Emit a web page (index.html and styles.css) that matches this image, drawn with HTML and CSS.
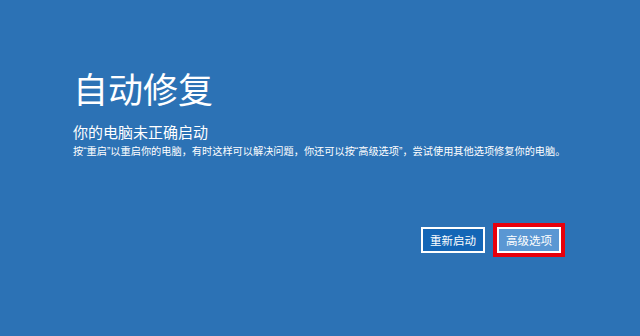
FILE: index.html
```html
<!DOCTYPE html>
<html lang="zh-CN">
<head>
    <meta charset="UTF-8">
    <meta name="viewport" content="width=device-width, initial-scale=1.0">
    <title>自动修复</title>
    <link rel="stylesheet" href="styles.css">
</head>
<body>

<div class="screen">
    <h1>自动修复</h1>
    <h2>你的电脑未正确启动</h2>
    <p class="message">按“重启”以重启你的电脑，有时这样可以解决问题，你还可以按“高级选项”，尝试使用其他选项修复你的电脑。</p>

    <div class="actions">
        <button class="btn btn-restart">重新启动</button>
        <button class="btn btn-advanced">高级选项</button>
    </div>
</div>

</body>
</html>
```

FILE: styles.css
```css
body {
    margin: 0;
    padding: 0;
    background-color: #2c72b5;
    font-family: "Noto Sans CJK SC", "Noto Sans", sans-serif;
    color: #fff;
    height: 100vh;
}

.screen {
    padding: 68px 79px 0 73px;
}

h1 {
    margin: 0;
    font-size: 35px;
    line-height: 40px;
    font-weight: 400;
}

h2 {
    margin: 15px 0 0;
    font-size: 15px;
    line-height: 18px;
    font-weight: 400;
}

/* narrow latin quotes, like the original system font */
.message {
    margin: 4px 0 0;
    font-family: "Liberation Sans", "Noto Sans CJK SC", sans-serif;
    font-size: 10.2px;
    line-height: 14px;
    white-space: nowrap;
}

.actions {
    display: flex;
    justify-content: flex-end;
    gap: 12px;
    margin-top: 68px;
}

.btn {
    font-family: inherit;
    font-size: 11.5px;
    color: #fff;
    height: 26px;
    padding: 0 7px;
    border: 2px solid #fff;
    border-radius: 0;
    cursor: pointer;
}

.btn-restart {
    background-color: #1466b6;
}

.btn-advanced {
    background-color: #5a97d3;
    outline: 4px solid #e8000b;
    outline-offset: 0;
}
```
